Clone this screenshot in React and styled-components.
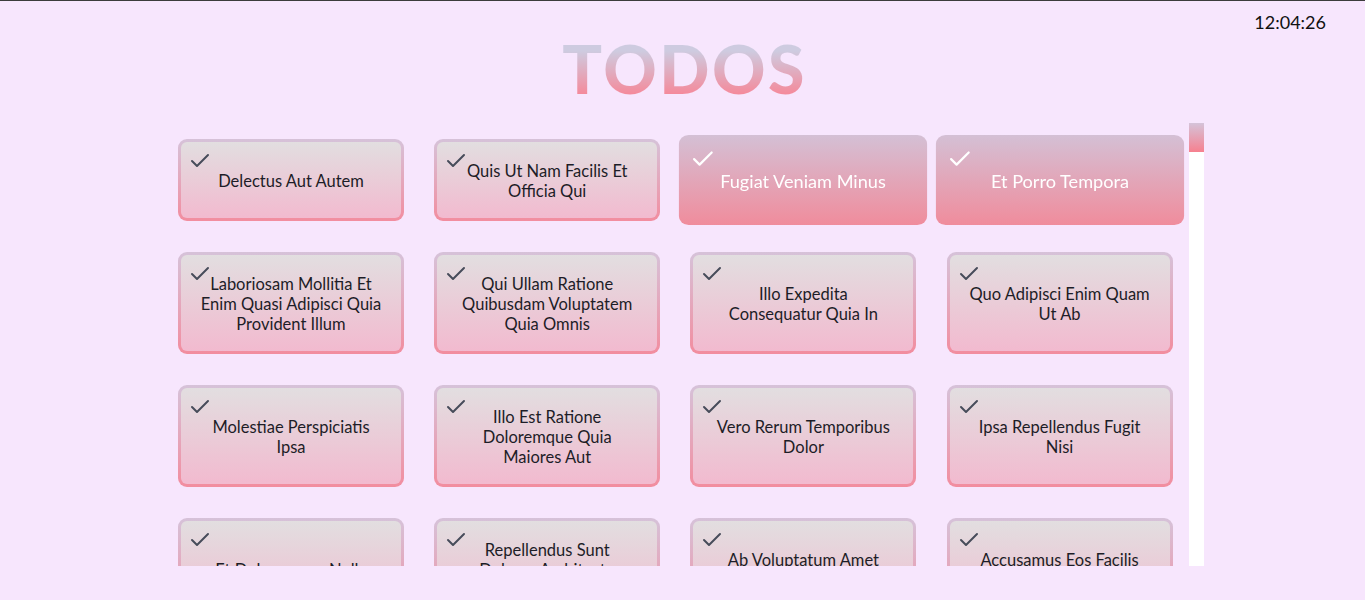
import React from "react";
import styled, { createGlobalStyle } from "styled-components";
import { Check } from "lucide-react";

const GlobalStyle = createGlobalStyle`
  html, body { margin: 0; padding: 0; }
  body {
    background: #f7e6fd;
    font-family: "Lato", "Open Sans", sans-serif;
    border-top: 1px solid #3c3c3c;
    height: 599px;
    overflow: hidden;
  }
`;

const TITLES = [
  "delectus aut autem",
  "quis ut nam facilis et officia qui",
  "fugiat veniam minus",
  "et porro tempora",
  "laboriosam mollitia et enim quasi adipisci quia provident illum",
  "qui ullam ratione quibusdam voluptatem quia omnis",
  "illo expedita consequatur quia in",
  "quo adipisci enim quam ut ab",
  "molestiae perspiciatis ipsa",
  "illo est ratione doloremque quia maiores aut",
  "vero rerum temporibus dolor",
  "ipsa repellendus fugit nisi",
  "et doloremque nulla",
  "repellendus sunt dolores architecto voluptatum",
  "ab voluptatum amet voluptas",
  "accusamus eos facilis sint et aut voluptatem",
  "quo laboriosam deleniti aut qui",
  "dolorum est consequatur ea mollitia in culpa",
  "molestiae ipsa aut voluptatibus pariatur dolor nihil",
  "ullam nobis libero sapiente ad optio sint",
];

const titleCase = (s) =>
  s
    .split(" ")
    .map((w) => w.charAt(0).toUpperCase() + w.slice(1))
    .join(" ");

const TODOS = TITLES.map((title, i) => ({
  id: i + 1,
  title: titleCase(title),
  selected: i === 2 || i === 3,
}));

const Page = styled.div`
  display: flex;
  flex-direction: column;
`;

const TopBar = styled.div`
  display: flex;
  justify-content: flex-end;
  padding: 9px 39px 0 0;
  height: 25px;
`;

const Clock = styled.div`
  font-family: "Lato", sans-serif;
  font-size: 18px;
  line-height: 25px;
  color: #111;
`;

const Title = styled.h1`
  margin: 0;
  align-self: center;
  margin-left: 4px;
  font-family: "Lato", sans-serif;
  font-weight: 900;
  font-size: 66px;
  line-height: 66px;
  height: 88px;
  padding-top: 1px;
  box-sizing: border-box;
  letter-spacing: 2.5px;
  background: linear-gradient(180deg, #cecbe0 18%, #f5899a 68%);
  -webkit-background-clip: text;
  background-clip: text;
  color: transparent;
`;

const Scroller = styled.div`
  margin-left: 178px;
  width: 1026px;
  height: 443px;
  display: flex;
`;

const Viewport = styled.div`
  flex: 1;
  overflow: hidden;
`;

const ScrollTrack = styled.div`
  width: 15px;
  flex: none;
  background: #ffffff;
  display: flex;
  flex-direction: column;
`;

const ScrollThumb = styled.div`
  height: 29px;
  background: linear-gradient(180deg, #d5c3d9, #f6808f);
`;

const Grid = styled.div`
  display: grid;
  grid-template-columns: repeat(4, 226px);
  column-gap: 30.2px;
  row-gap: 31px;
  padding: 16px 0;
`;

const Card = styled.div`
  position: relative;
  box-sizing: border-box;
  min-height: 82px;
  display: flex;
  align-items: center;
  justify-content: center;
  text-align: center;
  padding: 19px 19px 17px;
  border: 3px solid transparent;
  border-radius: 9px;
  font-size: 16.5px;
  line-height: 20px;
  color: ${(p) => (p.$selected ? "#ffffff" : "#1d1d27")};
  background: ${(p) =>
    p.$selected
      ? "linear-gradient(180deg, #d4c0d5, #f08c9c) border-box"
      : "linear-gradient(180deg, #e2dee0, #f2bacf) padding-box, linear-gradient(180deg, #d6c2d9, #f28d9f) border-box"};
  transform: ${(p) => (p.$selected ? "scale(1.1)" : "none")};
`;

const Tick = styled(Check)`
  position: absolute;
  left: 7px;
  top: 7px;
  color: ${(p) => (p.$selected ? "#ffffff" : "#474c5a")};
`;

const Label = styled.span`
  display: block;
`;

export default function App() {
  return (
    <>
      <GlobalStyle />
      <Page>
        <TopBar>
          <Clock>12:04:26</Clock>
        </TopBar>
        <Title>TODOS</Title>
        <Scroller>
          <Viewport>
            <Grid>
              {TODOS.map((t) => (
                <Card key={t.id} $selected={t.selected}>
                  <Tick size={24} strokeWidth={2} $selected={t.selected} />
                  <Label>{t.title}</Label>
                </Card>
              ))}
            </Grid>
          </Viewport>
          <ScrollTrack>
            <ScrollThumb />
          </ScrollTrack>
        </Scroller>
      </Page>
    </>
  );
}
